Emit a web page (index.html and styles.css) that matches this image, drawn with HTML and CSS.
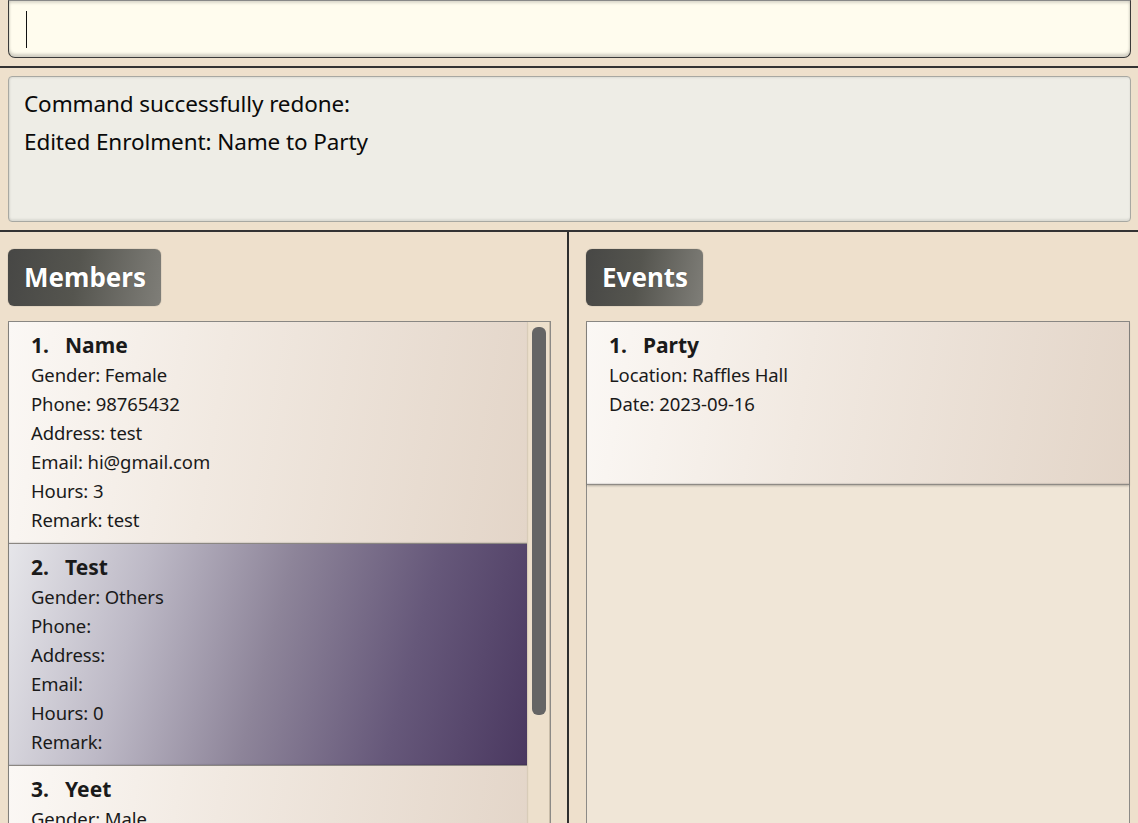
FILE: index.html
```html
<!DOCTYPE html>
<html>
<head>
<meta charset="utf-8">
<link rel="stylesheet" href="styles.css">
</head>
<body>
<div class="command-pane">
  <div class="command-box"><span class="caret"></span></div>
</div>
<div class="result-pane">
  <div class="result-box">
    <div class="result-line">Command successfully redone:</div>
    <div class="result-line">Edited Enrolment: Name to Party</div>
  </div>
</div>
<div class="main">
  <div class="column column-left">
    <div class="panel-title">Members</div>
    <div class="list list-members">
      <div class="cards">
        <div class="card">
          <div class="card-title"><span class="idx">1.</span>Name</div>
          <div class="field">Gender: Female</div>
          <div class="field">Phone: 98765432</div>
          <div class="field">Address: test</div>
          <div class="field">Email: hi@gmail.com</div>
          <div class="field">Hours: 3</div>
          <div class="field">Remark: test</div>
        </div>
        <div class="card card-selected">
          <div class="card-title"><span class="idx">2.</span>Test</div>
          <div class="field">Gender: Others</div>
          <div class="field">Phone:</div>
          <div class="field">Address:</div>
          <div class="field">Email:</div>
          <div class="field">Hours: 0</div>
          <div class="field">Remark:</div>
        </div>
        <div class="card">
          <div class="card-title"><span class="idx">3.</span>Yeet</div>
          <div class="field">Gender: Male</div>
          <div class="field">Phone:</div>
          <div class="field">Address:</div>
        </div>
      </div>
      <div class="scroll-track"><div class="scroll-thumb"></div></div>
    </div>
  </div>
  <div class="vdivider"></div>
  <div class="column column-right">
    <div class="panel-title">Events</div>
    <div class="list list-events">
      <div class="card card-event">
        <div class="card-title"><span class="idx">1.</span>Party</div>
        <div class="field">Location: Raffles Hall</div>
        <div class="field">Date: 2023-09-16</div>
      </div>
    </div>
  </div>
</div>
</body>
</html>
```

FILE: styles.css
```css
* { box-sizing: border-box; }
html, body { margin: 0; padding: 0; }
body {
  width: 1138px;
  height: 823px;
  overflow: hidden;
  background: #eee0cc;
  font-family: "Noto Sans", "Open Sans", sans-serif;
  color: #111;
}
.command-pane {
  padding: 0 7px 0 8px;
  height: 68px;
  border-bottom: 2px solid #333;
}
.command-box {
  height: 58px;
  background: #fffcee;
  border: 1.5px solid #3a3a3a;
  border-top: 1px solid #888;
  border-radius: 0 0 7px 7px;
  box-shadow: inset 0 -3px 3px rgba(0,0,0,0.18), inset 0 2px 3px rgba(0,0,0,0.15);
  padding: 10px 0 0 17px;
}
.caret {
  display: block;
  width: 1px;
  height: 37px;
  background: #111;
}
.result-pane {
  padding: 8px 7px 8px 8px;
  height: 164px;
  border-bottom: 2px solid #333;
}
.result-box {
  height: 146px;
  background: #eeede6;
  border: 1px solid #a8a8a2;
  border-radius: 4px;
  box-shadow: inset 0 -2px 2px rgba(0,0,0,0.08), inset 1px 1px 2px rgba(0,0,0,0.08);
  padding: 8px 15px;
}
.result-line {
  font-size: 22.5px;
  line-height: 38px;
  color: #0a0a0a;
  letter-spacing: -0.1px;
}
.main {
  display: flex;
  height: 591px;
}
.column {
  display: flex;
  flex-direction: column;
  padding-top: 17px;
  min-width: 0;
}
.column-left { width: 567px; padding-left: 8px; padding-right: 16px; }
.column-right { flex: 1; padding-left: 17px; padding-right: 8px; }
.vdivider { width: 2px; background: #2e2e2e; }
.panel-title {
  align-self: flex-start;
  height: 57px;
  padding: 0 15px 0 16px;
  line-height: 56px;
  font-size: 26px;
  font-weight: 700;
  color: #fff;
  border-radius: 6px;
  background: linear-gradient(100deg, #474745 0%, #55554f 45%, #7f7e78 100%);
  box-shadow: 0 0 1px rgba(0,0,0,0.5);
  text-shadow: 0 0 1px rgba(0,0,0,0.4);
}
.list {
  margin-top: 15px;
  flex: 1;
  border: 1px solid #8c8a86;
  border-bottom: none;
  display: flex;
  min-height: 0;
}
.list-members { background: #ede0cc; }
.list-events { background: #f0e6d7; flex-direction: column; }
.cards { flex: 1; display: flex; flex-direction: column; }
.scroll-track {
  width: 23px;
  border-left: 1px solid #d8ccb8;
  border-right: 1px solid #c8bca8;
  padding: 5px 3px 0 4px;
}
.scroll-thumb {
  height: 388px;
  background: #656565;
  border-radius: 6px;
}
.card {
  flex: none;
  padding: 9px 0 9px 22px;
  background: linear-gradient(100deg, #fbf8f5 0%, #f1e9e1 40%, #e3d5c8 100%);
  border-bottom: 1px solid #8e8a85;
  box-shadow: 0 1px 2px rgba(0,0,0,0.25), inset 0 -1px 1px rgba(0,0,0,0.1);
}
.card-selected {
  background: linear-gradient(105deg, #e6e6ea 0%, #bdb9c6 25%, #8d8499 50%, #66587a 75%, #4a3860 100%);
}
.card-event {
  height: 163px;
}
.card-title {
  font-size: 21px;
  font-weight: 700;
  line-height: 29px;
  color: #1a1a1a;
}
.idx { display: inline-block; width: 34px; }
.field {
  font-size: 18.5px;
  line-height: 29px;
  color: #1a1a1a;
  letter-spacing: -0.1px;
}
```
